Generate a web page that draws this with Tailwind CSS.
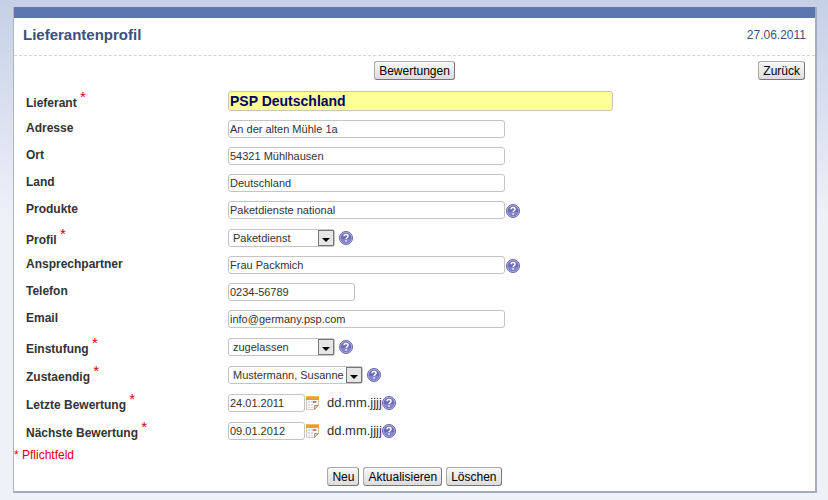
<!DOCTYPE html>
<html lang="de">
<head>
    <meta charset="UTF-8">
    <meta name="viewport" content="width=device-width, initial-scale=1.0">
    <title>Lieferantenprofil</title>
    <script src="https://cdn.jsdelivr.net/npm/@tailwindcss/browser@4"></script>
</head>
<body class="min-h-screen bg-[#eff1f9] bg-linear-to-b from-[#c5cfe6] to-[#eff1f9] to-[220px] pt-[7px] pb-[7px] pl-[13px] pr-[11px] font-['Liberation_Sans',Arial,sans-serif] text-[12px] leading-4 text-[#333]">
    <!-- shared symbols -->
    <svg class="hidden">
        <symbol id="help" viewBox="0 0 14 14">
            <circle cx="7" cy="7" r="6.5" fill="#b4b4e2" stroke="#6464aa"/>
            <circle cx="7" cy="7" r="5.3" fill="#6c6cb4"/>
            <path d="M2 8a5.200 5.200 0 0 0 10 0z" fill="#8484d2"/>
            <path d="M5 5.300C5 4.100 5.900 3.500 7 3.500s2.100.6 2.100 1.700c0 1.400-2 1.400-2 2.900" fill="none" stroke="#fff" stroke-width="1.400"/>
            <rect x="6.300" y="9.200" width="1.500" height="1.500" fill="#fff"/>
        </symbol>
        <symbol id="calendar" viewBox="0 0 13 14">
            <path d="M.5 .5h12v9l-4 4h-8z" fill="#fbfaf8" stroke="#d3c8bc"/>
            <path d="M0 0h13v4H0z" fill="#f59b2d"/>
            <path d="M0 0h13v1H0z" fill="#fbb95d"/>
            <path d="M2 5h2v2H2zM5 5h2v2H5zM2 8h2v2H2zM5 8h2v2H5zM2 11h2v1H2zM5 11h2v1H5zM10 5h1v2h-1z" fill="#d6dae2"/>
            <path d="M7 5h3v2H7z" fill="#dd7a52"/>
            <path d="M8.500 13.500v-4h4z" fill="#d9cbbb" stroke="#b39a80"/>
        </symbol>
    </svg>

    <main class="min-h-[486px] bg-white border-l border-l-[#b0b3ba] border-r-2 border-b-2 border-r-[#a6abbd] border-b-[#a6abb8]">
        <div class="h-[11px] bg-[#5c76b0]"></div>
        <header class="flex justify-between items-center h-[38px] px-[9px] pb-[3px] border-b border-dashed border-[#d4d4d4] text-[#3b5180]">
            <h1 class="text-[15px] font-bold">Lieferantenprofil</h1>
            <span>27.06.2011</span>
        </header>

        <form>
            <div class="grid grid-cols-[1fr_auto_1fr] pt-[5px] px-[10px] h-[31px]">
                <button type="button" class="col-start-2 h-[19px] px-1 leading-4 rounded-[3px] border border-[#aaa] border-r-[#777] border-b-[#777] bg-linear-to-b from-[#f8f8f8] to-[#dcdcdc] text-black">Bewertungen</button>
                <button type="button" class="justify-self-end h-[19px] px-1 leading-4 rounded-[3px] border border-[#aaa] border-r-[#777] border-b-[#777] bg-linear-to-b from-[#f8f8f8] to-[#dcdcdc] text-black">Zurück</button>
            </div>

            <div class="flex h-[30px] pl-3">
                <label for="lieferant" class="w-[202px] pt-2 font-bold">Lieferant <sup class="-top-[5px] font-normal text-[15px] text-[#d4000f]">*</sup></label>
                <input id="lieferant" type="text" value="PSP Deutschland" class="mt-1 w-[385px] h-5 px-px rounded-[3px] border border-[#c6c6b4] bg-[#ffff99] text-[14px] font-bold text-[#000066]">
            </div>
            <div class="flex h-[27px] pl-3">
                <label for="adresse" class="w-[202px] pt-[3px] font-bold">Adresse</label>
                <input id="adresse" type="text" value="An der alten Mühle 1a" class="mt-[3px] w-[277px] h-[18px] px-px rounded-[3px] border border-[#c4c4c4] text-[11px]">
            </div>
            <div class="flex h-[27px] pl-3">
                <label for="ort" class="w-[202px] pt-[3px] font-bold">Ort</label>
                <input id="ort" type="text" value="54321 Mühlhausen" class="mt-[3px] w-[277px] h-[18px] px-px rounded-[3px] border border-[#c4c4c4] text-[11px]">
            </div>
            <div class="flex h-[27px] pl-3">
                <label for="land" class="w-[202px] pt-[3px] font-bold">Land</label>
                <input id="land" type="text" value="Deutschland" class="mt-[3px] w-[277px] h-[18px] px-px rounded-[3px] border border-[#c4c4c4] text-[11px]">
            </div>
            <div class="flex h-[27px] pl-3">
                <label for="produkte" class="w-[202px] pt-[3px] font-bold">Produkte</label>
                <input id="produkte" type="text" value="Paketdienste national" class="mt-[3px] w-[277px] h-[18px] px-px rounded-[3px] border border-[#c4c4c4] text-[11px]">
                <button type="button" aria-label="Hilfe zu Produkte" class="self-start mt-1.5 ml-px"><svg class="size-[14px]"><use href="#help"/></svg></button>
            </div>
            <div class="flex h-7 pl-3">
                <label for="profil" class="w-[202px] pt-[7px] font-bold">Profil <sup class="-top-[5px] font-normal text-[15px] text-[#d4000f]">*</sup></label>
                <div class="relative self-start mt-1">
                    <select id="profil" class="block appearance-none w-[107px] h-[18px] pl-1 leading-4 rounded-[3px] border border-[#c4c4c4] text-[11px]">
                        <option>Paketdienst</option>
                    </select>
                    <svg class="absolute top-px right-px size-4 pointer-events-none" viewBox="0 0 16 16"><rect x=".5" y=".5" width="15" height="15" fill="#e6e6e6" stroke="#777"/><path d="M4 8h8l-4 4z" fill="#000"/></svg>
                </div>
                <button type="button" aria-label="Hilfe zu Profil" class="self-start mt-1.5 ml-1"><svg class="size-[14px]"><use href="#help"/></svg></button>
            </div>
            <div class="flex h-[27px] pl-3">
                <label for="ansprechpartner" class="w-[202px] pt-[3px] font-bold">Ansprechpartner</label>
                <input id="ansprechpartner" type="text" value="Frau Packmich" class="mt-[3px] w-[277px] h-[18px] px-px rounded-[3px] border border-[#c4c4c4] text-[11px]">
                <button type="button" aria-label="Hilfe zu Ansprechpartner" class="self-start mt-1.5 ml-px"><svg class="size-[14px]"><use href="#help"/></svg></button>
            </div>
            <div class="flex h-[27px] pl-3">
                <label for="telefon" class="w-[202px] pt-[3px] font-bold">Telefon</label>
                <input id="telefon" type="text" value="0234-56789" class="mt-[3px] w-[127px] h-[18px] px-px rounded-[3px] border border-[#c4c4c4] text-[11px]">
            </div>
            <div class="flex h-[27px] pl-3">
                <label for="email" class="w-[202px] pt-[3px] font-bold">Email</label>
                <input id="email" type="text" value="info@germany.psp.com" class="mt-[3px] w-[277px] h-[18px] px-px rounded-[3px] border border-[#c4c4c4] text-[11px]">
            </div>
            <div class="flex h-7 pl-3">
                <label for="einstufung" class="w-[202px] pt-[7px] font-bold">Einstufung <sup class="-top-[5px] font-normal text-[15px] text-[#d4000f]">*</sup></label>
                <div class="relative self-start mt-1">
                    <select id="einstufung" class="block appearance-none w-[107px] h-[18px] pl-1 leading-4 rounded-[3px] border border-[#c4c4c4] text-[11px]">
                        <option>zugelassen</option>
                    </select>
                    <svg class="absolute top-px right-px size-4 pointer-events-none" viewBox="0 0 16 16"><rect x=".5" y=".5" width="15" height="15" fill="#e6e6e6" stroke="#777"/><path d="M4 8h8l-4 4z" fill="#000"/></svg>
                </div>
                <button type="button" aria-label="Hilfe zu Einstufung" class="self-start mt-1.5 ml-1"><svg class="size-[14px]"><use href="#help"/></svg></button>
            </div>
            <div class="flex h-7 pl-3">
                <label for="zustaendig" class="w-[202px] pt-[7px] font-bold">Zustaendig <sup class="-top-[5px] font-normal text-[15px] text-[#d4000f]">*</sup></label>
                <div class="relative self-start mt-1">
                    <select id="zustaendig" class="block appearance-none w-[135px] h-[18px] pl-1 leading-4 rounded-[3px] border border-[#c4c4c4] text-[11px]">
                        <option>Mustermann, Susanne</option>
                    </select>
                    <svg class="absolute top-px right-px size-4 pointer-events-none" viewBox="0 0 16 16"><rect x=".5" y=".5" width="15" height="15" fill="#e6e6e6" stroke="#777"/><path d="M4 8h8l-4 4z" fill="#000"/></svg>
                </div>
                <button type="button" aria-label="Hilfe zu Zustaendig" class="self-start mt-1.5 ml-1"><svg class="size-[14px]"><use href="#help"/></svg></button>
            </div>
            <div class="flex h-7 pl-3">
                <label for="letzte" class="w-[202px] pt-[7px] font-bold">Letzte Bewertung <sup class="-top-[5px] font-normal text-[15px] text-[#d4000f]">*</sup></label>
                <input id="letzte" type="text" value="24.01.2011" class="mt-1 w-[77px] h-[18px] px-px rounded-[3px] border border-[#c4c4c4] text-[11px]">
                <button type="button" aria-label="Kalender" class="self-start mt-1.5 ml-px"><svg class="w-[13px] h-[14px]"><use href="#calendar"/></svg></button>
                <span class="pt-[5px] pl-2 text-[13px]">dd.mm.jjjj</span>
                <button type="button" aria-label="Hilfe zu Letzte Bewertung" class="self-start mt-1.5"><svg class="size-[14px]"><use href="#help"/></svg></button>
            </div>
            <div class="flex h-7 pl-3">
                <label for="naechste" class="w-[202px] pt-[7px] font-bold">Nächste Bewertung <sup class="-top-[5px] font-normal text-[15px] text-[#d4000f]">*</sup></label>
                <input id="naechste" type="text" value="09.01.2012" class="mt-1 w-[77px] h-[18px] px-px rounded-[3px] border border-[#c4c4c4] text-[11px]">
                <button type="button" aria-label="Kalender" class="self-start mt-1.5 ml-px"><svg class="w-[13px] h-[14px]"><use href="#calendar"/></svg></button>
                <span class="pt-[5px] pl-2 text-[13px]">dd.mm.jjjj</span>
                <button type="button" aria-label="Hilfe zu Nächste Bewertung" class="self-start mt-1.5"><svg class="size-[14px]"><use href="#help"/></svg></button>
            </div>

            <p class="pt-px text-[#d4000f]">* Pflichtfeld</p>

            <div class="flex justify-center gap-1 pt-1">
                <button type="button" class="h-[19px] px-1 leading-4 rounded-[3px] border border-[#aaa] border-r-[#777] border-b-[#777] bg-linear-to-b from-[#f8f8f8] to-[#dcdcdc] text-black">Neu</button>
                <button type="submit" class="h-[19px] px-1 leading-4 rounded-[3px] border border-[#aaa] border-r-[#777] border-b-[#777] bg-linear-to-b from-[#f8f8f8] to-[#dcdcdc] text-black">Aktualisieren</button>
                <button type="button" class="h-[19px] px-1 leading-4 rounded-[3px] border border-[#aaa] border-r-[#777] border-b-[#777] bg-linear-to-b from-[#f8f8f8] to-[#dcdcdc] text-black">Löschen</button>
            </div>
        </form>
    </main>
</body>
</html>
